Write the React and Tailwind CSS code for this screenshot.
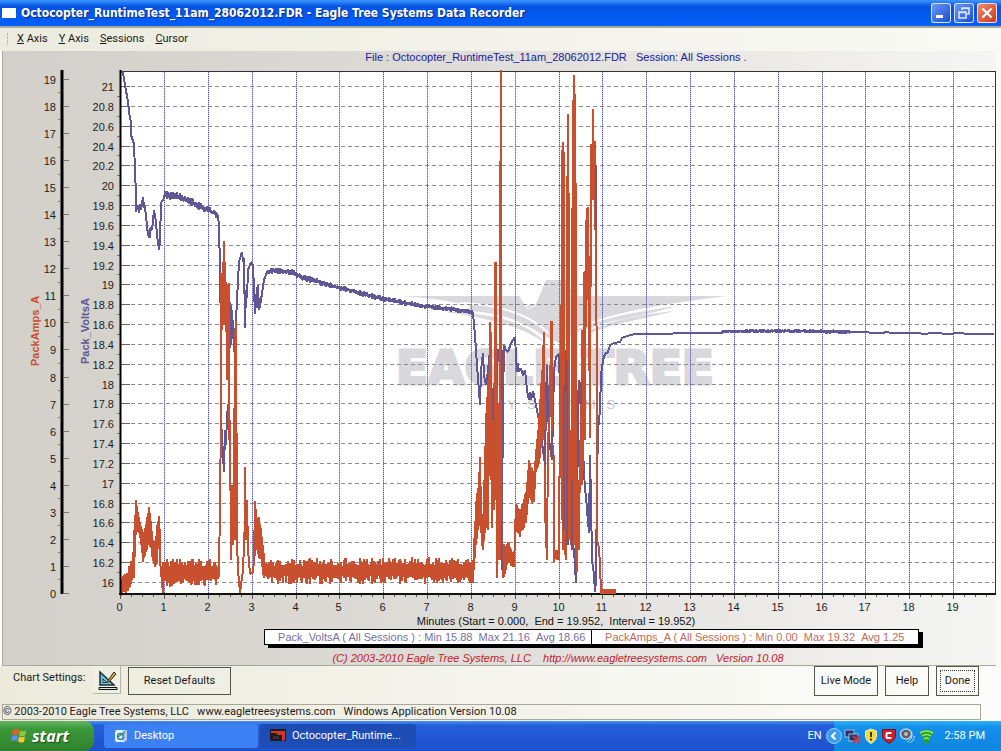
import React from "react";

const VOLT = "#5f5796";
const AMP = "#c8502f";

const noise = (n) => {
  const s = Math.sin(n * 127.1 + 11.7) * 43758.5453;
  return s - Math.floor(s);
};

// Rows of [x, top, bottom]: the trace swings between both limits at each pixel.
const band = (rows, jitter = 0) => {
  const out = [];
  for (let i = 0; i < rows.length - 1; i++) {
    const [x0, t0, b0] = rows[i];
    const [x1, t1, b1] = rows[i + 1];
    for (let x = x0; x < x1; x++) {
      const k = (x - x0) / (x1 - x0);
      out.push([x, t0 + (t1 - t0) * k - noise(x) ** 2 * jitter]);
      out.push([x, b0 + (b1 - b0) * k + noise(x + 0.5) ** 2 * jitter]);
    }
  }
  return out;
};

const amps = [
  ...band([[121, 584, 593], [123, 576, 590], [128, 573, 590], [131, 562, 583], [133, 565, 576], [134, 530, 575], [136, 501, 535], [138, 512, 528], [140, 522, 538], [143, 535, 560], [146, 525, 550], [149, 508, 542], [151, 522, 548], [153, 540, 560], [155, 545, 567], [157, 527, 562], [159, 516, 535], [161, 545, 580]], 3),
  [163, 593], [163, 562],
  ...band([[164, 566, 580], [219, 567, 578]], 8),
  [219, 575], [220, 500], [221, 420], [221, 273], [222, 330], [223, 262],
  [224, 325], [224, 241], [225, 325], [225, 262], [226, 325], [226, 282], [227, 380], [227, 284], [228, 380], [229, 283], [229, 440], [230, 420], [231, 560], [232, 485], [233, 545], [234, 490], [235, 330], [235, 540], [236, 321], [237, 540],
  [238, 570], [240, 593], [243, 570], [245, 520], [245, 467], [246, 540], [247, 500], [248, 550], [250, 574], [253, 572], [254, 560],
  ...band([[255, 501, 555], [257, 520, 545], [259, 518, 558], [261, 530, 555], [263, 545, 575], [265, 563, 580]], 3),
  ...band([[266, 566, 576], [473, 565, 576]], 8),
  [473, 583],
  ...band([[474, 540, 570], [476, 502, 545], [478, 488, 530], [480, 458, 520], [482, 515, 545], [483, 525, 550], [484, 480, 540], [486, 415, 525], [488, 380, 530], [489, 400, 475]], 2),
  [490, 322], [490, 475], [491, 332], [491, 480], [492, 400], [492, 528], [493, 420], [494, 510], [495, 262], [495, 500], [496, 262], [497, 505], [497, 578], [498, 430], [499, 560], [500, 258], [501, 70], [501, 560], [502, 560],
  ...band([[503, 545, 577], [506, 550, 570], [508, 543, 560], [512, 553, 564], [515, 557, 568]], 3),
  ...band([[516, 507, 530], [520, 511, 533], [523, 505, 528], [526, 492, 520], [529, 462, 495], [532, 470, 501], [534, 472, 500], [536, 450, 472], [538, 430, 465], [540, 400, 455], [542, 370, 440], [543, 345, 430], [544, 335, 420]], 4),
  [544, 332], [544, 440], [545, 400], [545, 510], [547, 560], [548, 440], [550, 410], [551, 322], [552, 322], [552, 440], [554, 460], [554, 562], [556, 550], [557, 560], [558, 550], [559, 560], [560, 400],
  [561, 470], [562, 150], [562, 520], [563, 142], [563, 550], [564, 152], [564, 540], [566, 560], [567, 240], [568, 114], [569, 270], [569, 540], [570, 440], [571, 545], [573, 100], [573, 540], [574, 75], [574, 545], [575, 94], [576, 267], [576, 550], [577, 572], [578, 480], [579, 550], [580, 440], [581, 480], [582, 330], [582, 485], [583, 330], [583, 470], [584, 272], [584, 330], [585, 271], [585, 440], [586, 220], [586, 320], [587, 208], [587, 300], [588, 207], [589, 302], [590, 438], [591, 144], [591, 200], [592, 144], [592, 200], [593, 109], [593, 200], [594, 142], [595, 142], [595, 230], [596, 190], [596, 230], [597, 420], [597, 540], [599, 548], [600, 565], [601, 592],
];

const volts = [
  [121, 71], [123, 73], [125, 85], [128, 102], [129, 112], [131, 122], [131, 135], [134, 144], [135, 170], [136, 195], [136, 212], [138, 205], [139, 213], [140, 204], [141, 210], [143, 197], [144, 207], [145, 207], [148, 235], [150, 238], [150, 228], [152, 230], [154, 210], [156, 222], [157, 235], [159, 250], [160, 240], [161, 203], [164, 198],
  ...band([[165, 193, 196], [178, 195, 198], [190, 200, 203], [208, 209, 211], [218, 214, 216]], 3),
  [218, 216], [219, 225], [220, 270], [221, 335], [221, 420], [224, 472], [225, 430], [226, 445], [227, 415], [229, 400], [230, 302], [231, 345], [231, 305], [233, 325], [234, 352], [236, 320], [238, 280], [239, 262], [242, 252], [243, 262], [244, 258], [245, 328], [246, 290], [247, 298], [248, 270], [251, 262], [253, 265], [254, 290], [255, 314], [257, 287], [257, 308], [258, 285], [259, 310], [261, 300], [264, 280], [267, 272],
  ...band([[268, 271, 273], [274, 269, 272], [293, 271, 273], [300, 275, 278], [340, 287, 289], [380, 297, 299], [395, 300, 302], [415, 304, 306], [440, 307, 309], [473, 311, 313]], 2),
  [473, 312], [474, 325], [475, 335], [476, 350], [477, 365], [480, 405], [481, 370], [483, 353], [484, 375], [486, 385], [488, 370], [490, 350], [492, 410], [493, 390], [494, 420], [496, 400], [498, 350], [500, 350], [502, 560], [503, 360], [504, 345], [506, 350], [508, 352], [511, 343], [515, 337], [516, 355], [517, 372], [518, 363], [519, 372], [521, 368], [523, 376], [525, 370], [527, 390], [529, 400], [530, 392], [531, 400], [533, 391], [534, 395], [537, 410], [540, 425], [543, 450], [545, 465], [546, 400], [547, 365], [549, 440], [552, 460], [554, 370], [556, 357], [559, 354], [560, 390], [562, 500], [564, 530], [566, 350], [568, 545], [570, 440], [572, 540], [574, 550], [576, 583], [577, 540], [578, 400], [579, 380], [581, 410], [583, 450], [585, 490], [586, 495], [587, 510], [589, 533], [590, 455], [591, 500], [592, 560], [594, 575], [595, 592], [596, 580], [597, 480], [598, 430], [600, 410], [601, 375], [603, 360], [605, 354], [608, 352], [610, 345], [614, 343], [620, 342], [622, 338], [627, 336], [635, 334], [672, 334], [674, 333], [700, 333], [722, 333],
  ...band([[723, 331, 332], [760, 330, 332], [800, 330, 332], [850, 331, 333]], 1),
  [850, 332], [868, 332], [870, 333], [884, 333], [885, 332], [893, 333], [920, 333], [922, 334], [934, 333], [950, 334], [956, 333], [972, 334], [994, 334],
];

// Stretches where both traces interleave.
const mixed = [
  [493, 388, 420], [502, 350, 400], [502, 520, 570], [504, 352, 372], [564, 385, 530], [567, 360, 545], [572, 480, 550],
  [579, 382, 404], [581, 382, 404], [552, 430, 460], [545, 430, 465], [596, 165, 230],
];

const pts = (a) => a.map(([x, y]) => `${x},${y.toFixed(1)}`).join(" ");
const range = (n) => Array.from({ length: n }, (_, i) => i);
const xAt = (m) => Math.round(120.3 + m * 43.83) + 0.5;
const vAt = (v) => Math.round(582 - (v - 16) * 99.2) + 0.5;
const aAt = (a) => Math.round(593 - a * 27.06) + 0.5;

function Chart() {
  const voltTicks = range(26).map((i) => 16 + i * 0.2);
  return (
    <svg viewBox="3 66 993 548" className="block w-full font-['Liberation_Sans',Arial,sans-serif] text-[11px]" role="img" aria-label="Pack voltage and current over time">
      <rect x="120" y="71" width="875" height="523" fill="#fff" />
      <g fill="#d9d9dd">
        <path d="M402 296 L520 296 L526 306 L536 304 L546 280 L566 280 L574 296 L726 296 C660 305 610 311 581 330 L560 343 C542 338 510 303 402 296Z" />
        <path d="M470 307 C510 308 535 322 545 336 L541 333 C525 319 500 312 470 310Z" stroke="#d9d9dd" strokeWidth="2" />
        <path d="M448 312 C495 315 525 322 543 341 C520 326 490 318 448 312Z" stroke="#d9d9dd" />
        <path d="M580 326 C610 315 650 310 676 306 C640 318 605 319 582 332Z" />
        <path d="M590 330 C625 316 650 314 674 311 C640 320 610 324 592 333Z" />
        <text x="396" y="384" fontSize="47" fontWeight="700" fontFamily="DejaVu Sans, sans-serif" stroke="#d9d9dd" strokeWidth="3">EAGLE TREE</text>
        <text x="488" y="409" fontSize="13" fill="#c8c8ce">{"S\u00a0\u00a0\u00a0Y\u00a0\u00a0\u00a0S\u00a0\u00a0\u00a0T\u00a0\u00a0\u00a0E\u00a0\u00a0\u00a0M\u00a0\u00a0\u00a0S"}</text>
      </g>
      <path d="M520 297 L528 309 L536 305" fill="none" stroke="#fff" strokeWidth="1" />
      <path d="M460 303 C505 304 535 319 548 333 M726 298 C650 308 610 314 578 328" fill="none" stroke="#fff" strokeWidth="2" />

      {voltTicks.map((v) => (
        <g key={v}>
          <path d={`M131 ${vAt(v)}H994`} stroke="#8c8c8c" strokeDasharray="4 3" />
          <path d={`M121 ${vAt(v)}h9`} stroke="#666" />
          {v < 21 && <path d={`M117 ${vAt(v + 0.1)}h3`} stroke="#777" />}
          <text x="114" y={vAt(v) + 4} textAnchor="end" fill="#1c1c1c">{Number(v.toFixed(1))}</text>
        </g>
      ))}
      {range(19).map((i) => (
        <path key={i} d={`M${xAt(i + 1)} 72V593`} stroke="#4a49ae" strokeDasharray="1 1" />
      ))}
      {range(19).map((i) => (
        <path key={i} d={`M${xAt(i + 1)} 72V593`} stroke="#6f6ecb" strokeOpacity="0.45" />
      ))}

      <path d="M120 71.5H995" stroke="#333" />
      <path d="M995.5 71V594" stroke="#333" />
      <polyline points={pts(volts)} fill="none" stroke={VOLT} strokeWidth="2" strokeLinejoin="bevel" shapeRendering="crispEdges" />
      <polyline points={pts(amps)} fill="none" stroke={AMP} strokeWidth="2" strokeLinejoin="bevel" shapeRendering="crispEdges" />
      <path d={mixed.map(([x, a, b]) => `M${x} ${a}V${b}`).join("")} stroke="#84506c" strokeWidth="2" />
      <path d="M120.5 70V594" stroke="#000" strokeWidth="2" />
      <path d="M119 594H996" stroke="#111" strokeWidth="2" />
      <path d="M600 591.5H616" stroke={AMP} strokeWidth="5" />

      {range(80).map((i) => (
        <path key={i} d={`M${xAt(i / 4)} 595v${i % 4 ? 2 : 4}`} stroke="#555" />
      ))}
      {range(20).map((i) => (
        <text key={i} x={xAt(i) - 1} y="611" textAnchor="middle" fill="#1c1c1c">{i}</text>
      ))}

      <path d="M62 70V594" stroke="#000" strokeWidth="3" />
      {range(20).map((a) => (
        <g key={a}>
          <path d={`M63 ${aAt(a)}h6`} stroke="#777" />
          {a < 19 && <path d={`M58 ${aAt(a + 0.5)}h3`} stroke="#777" />}
          <text x="56" y={aAt(a) + 4} textAnchor="end" fill="#1c1c1c">{a}</text>
        </g>
      ))}
      <text transform="translate(39 366) rotate(-90)" fill={AMP} fontWeight="700">PackAmps_A</text>
      <text transform="translate(89 364) rotate(-90)" fill={VOLT} fontWeight="700">Pack_VoltsA</text>
    </svg>
  );
}

function TitleBar() {
  const box = "flex h-5 w-5 items-center justify-center rounded-[3px] border border-white/80";
  return (
    <header className="flex h-[26px] items-center bg-linear-to-b from-[#3d95ff] via-[#0453e3] via-25% to-[#0560fa] pr-1 pl-0.5">
      <span className="h-2.5 w-3.5 bg-white" />
      <h1 className="ml-[5px] flex-1 font-['DejaVu_Sans_Condensed','DejaVu_Sans',sans-serif] text-[12px] font-bold text-white [text-shadow:1px_1px_1px_#0a2a88]">
        Octocopter_RuntimeTest_11am_28062012.FDR - Eagle Tree Systems Data Recorder
      </h1>
      <div className="flex gap-[3px]">
        <button aria-label="Minimize" className={`${box} bg-linear-to-br from-[#6d97f3] to-[#1c4bd0]`}>
          <svg width="16" height="16" viewBox="0 0 16 16"><path d="M3 11.5h7" stroke="#fff" strokeWidth="3" /></svg>
        </button>
        <button aria-label="Restore" className={`${box} bg-linear-to-br from-[#6d97f3] to-[#1c4bd0]`}>
          <svg width="16" height="16" viewBox="0 0 16 16" fill="none" stroke="#dfe8ff"><path d="M6 5V3h7v6h-2M6 3.5h7" strokeWidth="1.5" /><path d="M3 7h7v6H3zM3 7.5h7" strokeWidth="1.5" /></svg>
        </button>
        <button aria-label="Close" className={`${box} bg-linear-to-br from-[#ee8a6b] to-[#c9371a]`}>
          <svg width="16" height="16" viewBox="0 0 16 16"><path d="M3.500 3.500l9 9M12.500 3.500l-9 9" stroke="#fff" strokeWidth="2.200" /></svg>
        </button>
      </div>
    </header>
  );
}

function MenuBar() {
  const items = ["X Axis", "Y Axis", "Sessions", "Cursor"];
  return (
    <nav className="flex h-[25px] items-center gap-[11px] border-t-2 border-[#a9a999] bg-linear-to-r from-[#ecebdf] to-[#fafaf6] pb-0.5 pl-[7px]">
      <span className="-mr-0.5 h-3 border-l border-dotted border-[#a5a597]" />
      {items.map((t) => (
        <button key={t}><u>{t[0]}</u>{t.slice(1)}</button>
      ))}
    </nav>
  );
}

function ToolBar() {
  const btn = "border border-[#55564c] text-center";
  return (
    <section className="flex h-[38px] items-start bg-linear-to-r from-[#ebeadb] via-[#f5f5ee] to-[#fcfcfa] pr-[22px] pl-[13px]">
      <span className="w-20 pt-[5px]">Chart Settings:</span>
      <button aria-label="Chart settings" className="h-7 w-7 border-r border-b border-[#b5b4a6] bg-[#f0efe4] pl-1">
        <svg width="22" height="22" viewBox="0 0 22 22">
          <path d="M3 3L17 16H3Z" fill="#6cc0d8" stroke="#1f2f3c" strokeWidth="1.500" />
          <path d="M6 10L9.500 13.500H6Z" fill="#e8f6fa" stroke="#1f2f3c" />
          <path d="M10 13L17 3L19 5L12 13Z" fill="#e0a63a" stroke="#2b2413" />
          <path d="M2 18.500H20V20.500H2Z" fill="#d9e6ea" stroke="#111" />
        </svg>
      </button>
      <button className={`${btn} ml-[7px] mt-px h-7 w-[103px]`}>Reset Defaults</button>
      <div className="ml-auto flex gap-[7px]">
        <button className={`${btn} h-[30px] w-16`}>Live Mode</button>
        <button className={`${btn} h-[30px] w-11`}>Help</button>
        <button className={`${btn} h-[30px] w-[43px] p-[3px]`}>
          <span className="flex h-full items-center justify-center border border-dotted border-[#333]">Done</span>
        </button>
      </div>
    </section>
  );
}

function TaskBar() {
  const task = "flex h-6 items-center gap-1.5 rounded-[3px] px-2.5 text-white";
  return (
    <footer className="flex h-[30px] items-center bg-linear-to-b from-[#4a91f4] via-[#245edb] via-15% to-[#1e50cc]">
      <button className="flex h-full w-[94px] items-center gap-1 rounded-r-[10px] bg-linear-to-b from-[#66b565] via-[#3c9a3a] via-25% to-[#2f812d] pl-2.5 font-['Open_Sans',sans-serif] text-[16px] font-bold text-white italic [text-shadow:1px_1px_1px_#1c4d1b]">
        <svg width="18" height="18" viewBox="0 0 18 18">
          <path d="M3 3Q6 1 9 3L8 8Q5 6.500 2 8Z" fill="#f0592b" />
          <path d="M10 3.500Q13 5 16.500 3.500L15 8.500Q12 10 9 8.500Z" fill="#8cc63e" />
          <path d="M2 9Q5 7.500 8 9L7 14Q4 12.500 1 14Z" fill="#5b8ff0" />
          <path d="M9 9.500Q12 11 15 9.500L14 15Q11 16 8 14.500Z" fill="#fbc52f" />
        </svg>
        start
      </button>
      <button className={`${task} ml-2.5 w-[154px] bg-[#3c81f3]`}>
        <svg width="14" height="16" viewBox="0 0 14 16">
          <rect x="1" y="2" width="10" height="12" rx="2" fill="#e6f2fc" />
          <path d="M8 3L13 2V12L9 15Z" fill="#b3cde6" />
          <circle cx="6.500" cy="8.500" r="3" fill="none" stroke="#3679b5" strokeWidth="1.500" />
          <path d="M4 9L11 4" stroke="#3d8f5e" strokeWidth="1.500" />
        </svg>
        Desktop
      </button>
      <button className={`${task} ml-0.5 w-[156px] bg-[#1c4cb4]`}>
        <svg width="16" height="14" viewBox="0 0 16 14" className="shrink-0">
          <rect width="16" height="12" rx="1" fill="#221a20" />
          <path d="M1 2H15V11L12 12V6H8L6 4H1Z" fill="#d33a25" />
          <path d="M3 7H9V10H3Z" fill="#3c2d31" />
        </svg>
        Octocopter_Runtime...
      </button>
      <span className="mr-3 ml-auto text-white">EN</span>
      <div className="flex h-full items-center gap-0.5 bg-linear-to-b from-[#2fb1f6] via-[#1290ea] via-20% to-[#0f86e0] pr-4 text-white">
        <button aria-label="Show hidden icons" className="-ml-2">
          <svg width="16" height="16" viewBox="0 0 16 16"><circle cx="8" cy="8" r="7.500" fill="#3a9df0" stroke="#9ccdf8" /><path d="M9.500 4.500L6 8L9.500 11.500" fill="none" stroke="#fff" strokeWidth="2" /></svg>
        </button>
        <svg width="17" height="16" viewBox="0 0 17 16">
          <rect x="1" y="2" width="9" height="7" fill="#27356f" stroke="#a9b7d5" /><rect x="5" y="6" width="9" height="7" fill="#27356f" stroke="#a9b7d5" />
          <path d="M9 8L16 15M16 8L9 15" stroke="#d8303f" strokeWidth="2" />
        </svg>
        <svg width="16" height="16" viewBox="0 0 16 16"><path d="M8 1L13.500 3V8Q13 13 8 15.500Q3 13 2.500 8V3Z" fill="#f5d83a" stroke="#e9edc4" /><path d="M8 4V9M8 10.500V12.500" stroke="#3c3410" strokeWidth="2" /></svg>
        <svg width="16" height="16" viewBox="0 0 16 16"><path d="M1.500 1.500H14.500V9Q13 13 8 15.500Q3 13 1.500 9Z" fill="#cf1f2c" stroke="#761622" /><path d="M10.500 5H6.500Q5.500 5 5.500 6V9Q5.500 10 6.500 10H10.500" fill="none" stroke="#fff" strokeWidth="2" /></svg>
        <svg width="17" height="16" viewBox="0 0 17 16"><ellipse cx="7" cy="6" rx="5.500" ry="5" fill="#55606f" stroke="#c7ced8" strokeWidth="1.500" /><circle cx="7" cy="6" r="2" fill="#b5bdc8" /><path d="M13 5Q14 11 8 14M15.500 8Q15 13 11 15" fill="none" stroke="#bad9f4" /></svg>
        <svg width="17" height="16" viewBox="0 0 17 16" fill="none"><path d="M1 4Q8.500 -1 16 4L11 11V15H6V11Z" fill="#2a9c2c" /><path d="M2 5Q8.500 1 15 5M4 8Q8.500 5 13 8M6 11Q8.500 9 11 11" stroke="#8ff06c" strokeWidth="1.500" /></svg>
        <span className="ml-2">2:58 PM</span>
      </div>
    </footer>
  );
}

export default function App() {
  return (
    <div className="flex min-h-screen flex-col bg-[#fbfbf8] font-[Roboto,'DejaVu_Sans_Condensed',sans-serif] text-[11px] leading-[14px] text-[#1a1a1a]">
      <TitleBar />
      <MenuBar />
      <main className="mr-[5px] ml-0.5 flex-1 border-b border-l border-[#a9a89b] bg-linear-to-r from-[#d3cfc9] via-[#e0deda] to-[#f5f5f3] font-['Liberation_Sans',Arial,sans-serif]">
        <p className="pb-[3px] pl-[113px] text-center leading-3 text-[#22189c]">
          File : Octocopter_RuntimeTest_11am_28062012.FDR &nbsp; Session: All Sessions .
        </p>
        <Chart />
        <p className="pl-[113px] text-center text-[#111]">Minutes (Start = 0.000, &nbsp;End = 19.952, &nbsp;Interval = 19.952)</p>
        <div className="mt-px ml-[261px] grid h-4 w-[655px] max-w-full grid-cols-2 border border-black bg-white text-center shadow-[4px_3px_0_#000]">
          <span className="border-r border-black pl-2 text-[#77709f]">Pack_VoltsA ( All Sessions ) : Min 15.88 &nbsp;Max 21.16 &nbsp;Avg 18.66</span>
          <span className="text-[#bf6c57]">PackAmps_A ( All Sessions ) : Min 0.00 &nbsp;Max 19.32 &nbsp;Avg 1.25</span>
        </div>
        <p className="mt-[6px] pl-[117px] text-center text-[#c0222c] italic">
          (C) 2003-2010 Eagle Tree Systems, LLC &nbsp; &nbsp;http://www.eagletreesystems.com &nbsp; Version 10.08
        </p>
      </main>
      <ToolBar />
      <div className="bg-linear-to-r from-[#ebeadb] to-[#fcfcfa] pr-5 pb-px pl-0.5">
        <p className="h-4 border border-[#a8a798] leading-[14px]">© 2003-2010 Eagle Tree Systems, LLC &nbsp; www.eagletreesystems.com &nbsp; Windows Application Version 10.08</p>
      </div>
      <TaskBar />
    </div>
  );
}
